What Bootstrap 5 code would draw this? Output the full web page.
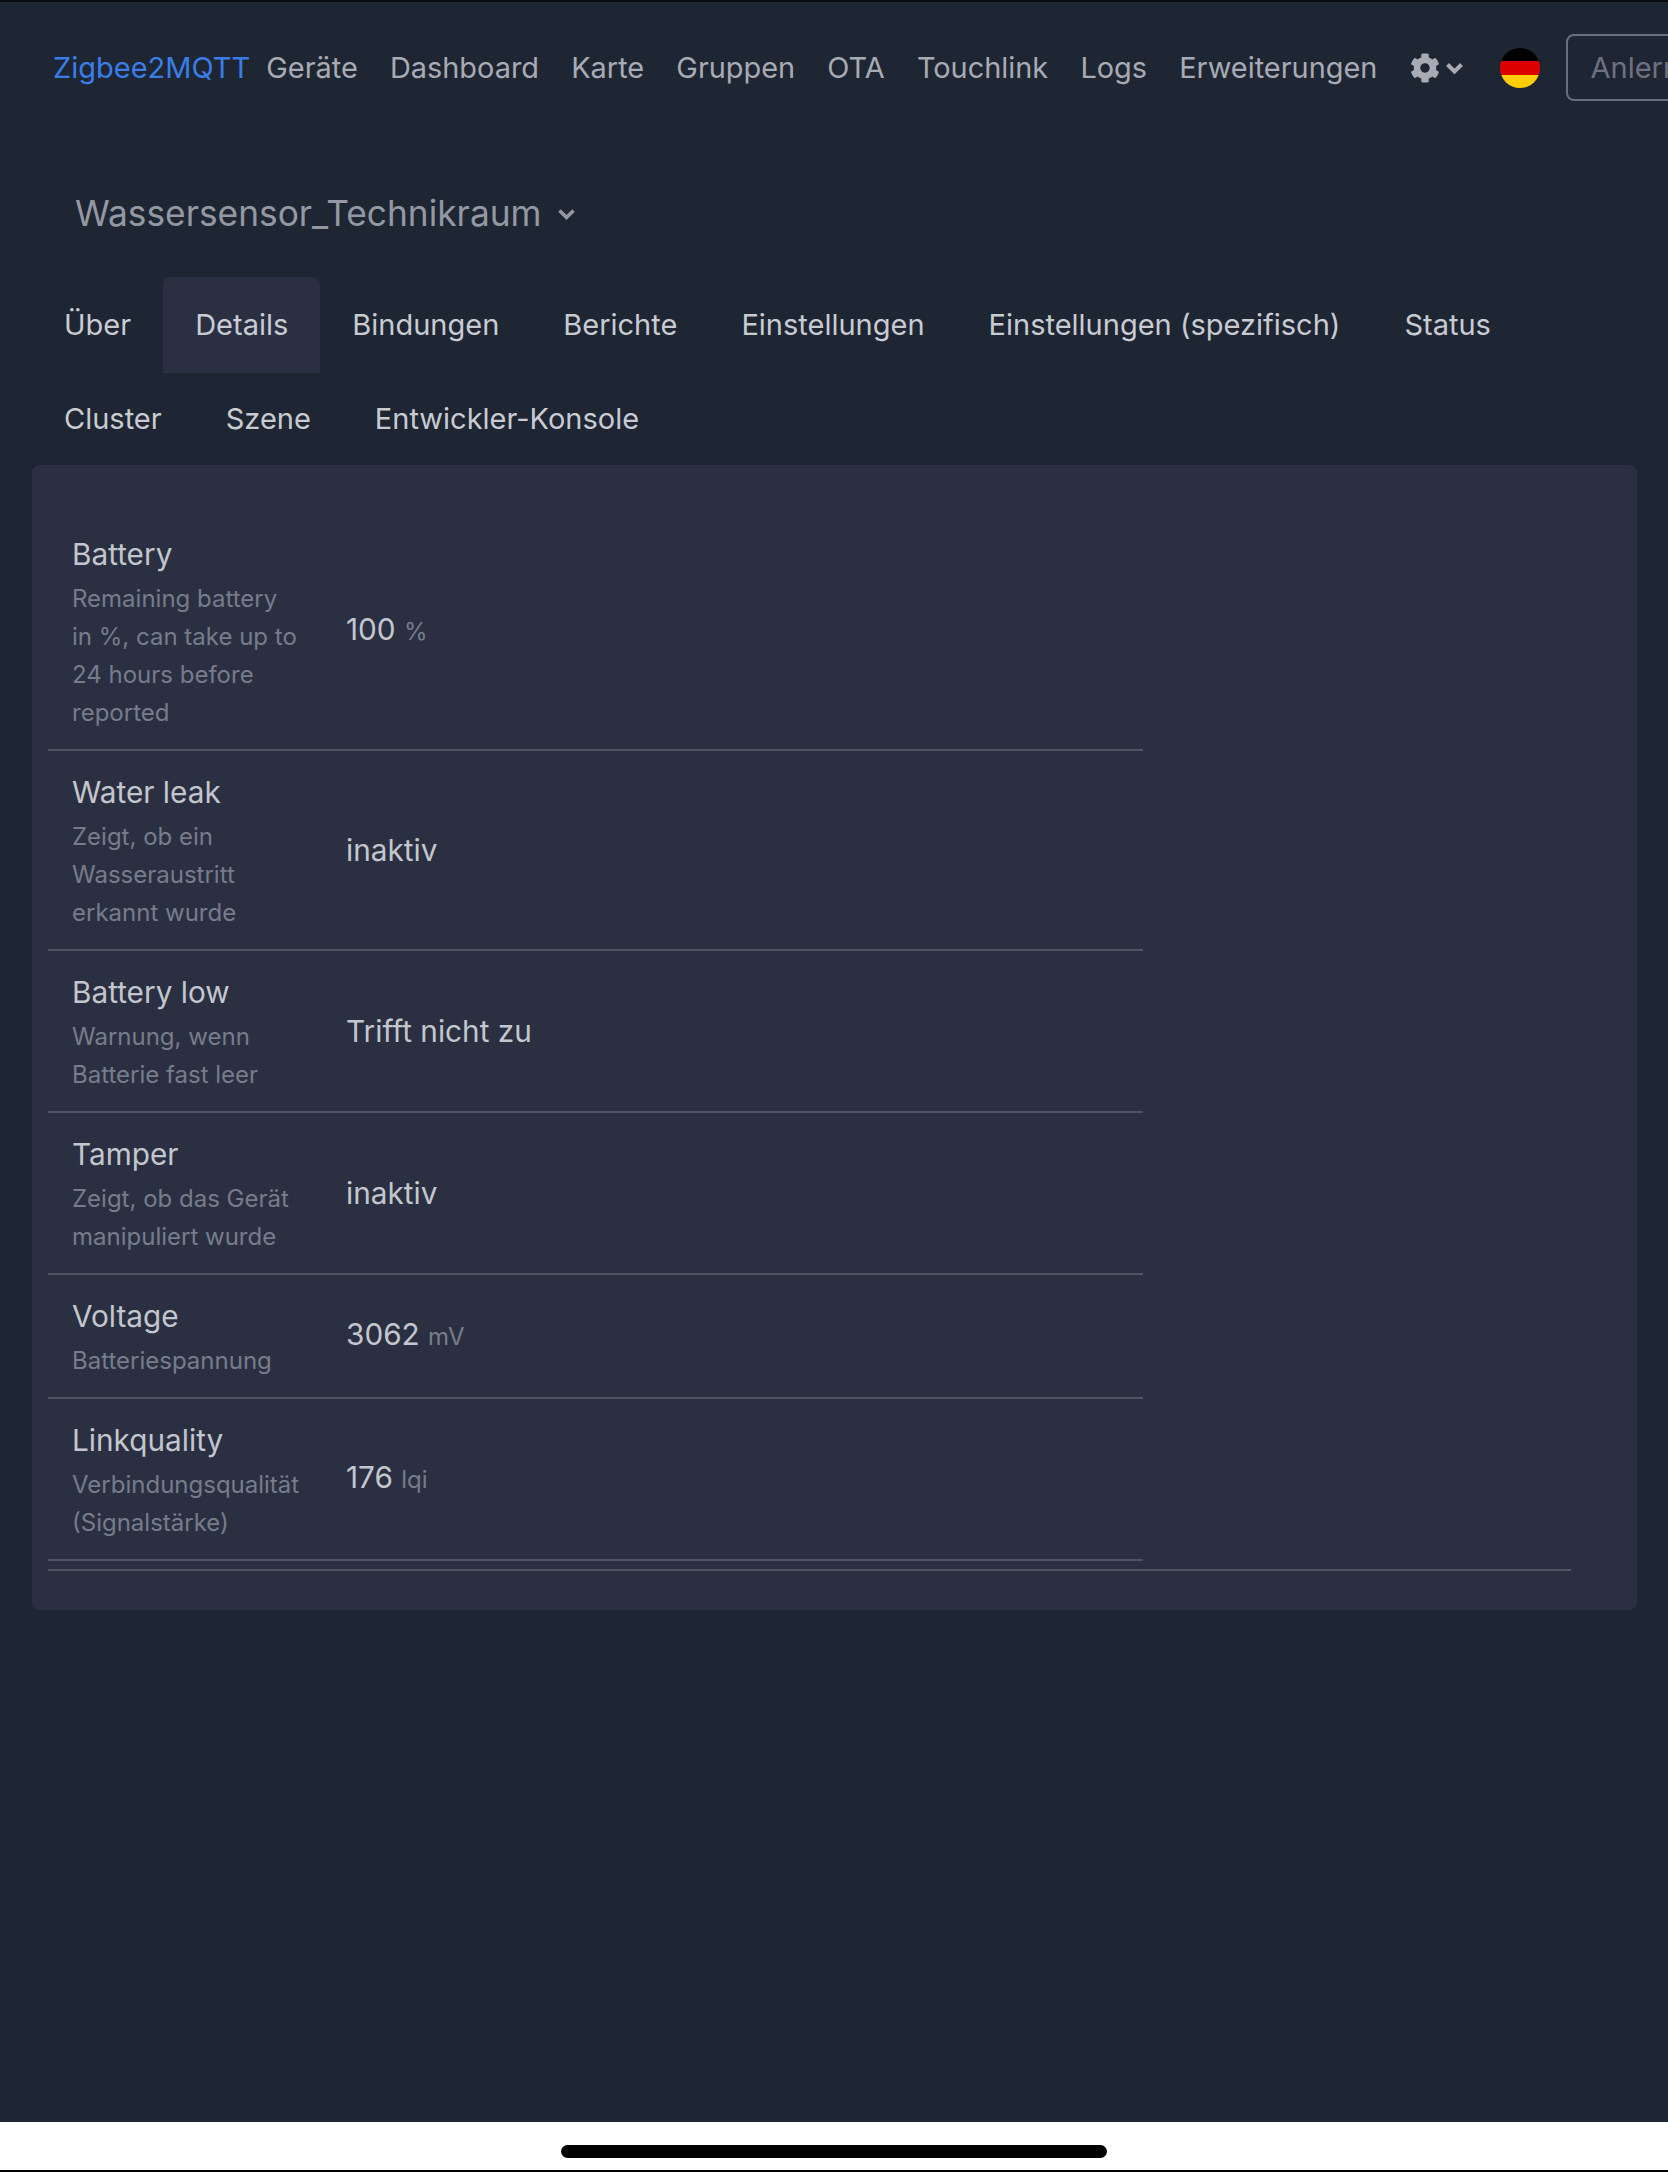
<!doctype html>
<html lang="de">
<head>
<meta charset="utf-8">
<title>Zigbee2MQTT</title>
<link href="https://cdn.jsdelivr.net/npm/bootstrap@5.3.0/dist/css/bootstrap.min.css" rel="stylesheet">
<style>
html,body{height:100%}
body{font-family:Inter,"Liberation Sans",sans-serif;background:#1f2633;color:#c9cbd2;font-size:29px;line-height:42px;overflow:hidden;width:1668px;height:2172px;border-top:2px solid #0b0e14}
.zapp{flex:1 1 auto;min-height:0;overflow:hidden}
.znav{padding:32px 0 0 53px;flex-wrap:nowrap;justify-content:flex-start;width:1900px}
.znav .navbar-brand{color:#3b7de8;font-size:29px;line-height:42px;padding:0;margin:0 16px 0 0}
.znav.navbar-expand .navbar-nav .nav-link{color:#a8abb3;font-size:28.9px;line-height:42px;padding:0;margin-right:32.2px}
.zgear{display:flex;align-items:center;gap:6px;color:#a8abb3;margin-right:37px}
.zflag{width:40px;height:40px;background:linear-gradient(#000 33.3%,#d00 33.3%,#d00 66.6%,#ffce00 66.6%);margin-right:26px;flex:none}
.zlearn.btn{font-size:29px;line-height:42px;padding:10.5px 23px;border:2px solid #6b6f7c;color:#6e7280;border-radius:8px;white-space:nowrap;background:transparent}
.ztitle{padding:0 0 0 75px;margin-top:85px;height:56px;margin-bottom:35px;line-height:52px;font-size:35.3px;color:#9498a2;gap:16px}
.ztabs{margin:0 0 0 32px;border:0;width:1560px;--bs-nav-tabs-border-width:2px;--bs-nav-tabs-border-radius:8px}
.ztabs .nav-link{font-size:29px;line-height:42px;padding:25px 30px;color:#c9cbd2;border:2px solid transparent}
.ztabs .nav-link.active{background:#2a3042;color:#c9cbd2;border-color:#2a3042}
.zpanel{margin-left:32px;width:1605px;background:#2a3042;border:0;border-radius:8px;padding:48px 66px 39px 16px;color:#c4c6cd}
.zexpo{width:1095px}
.zline{border-bottom:2px solid #4f5563;padding:20px 0 17px}
.zlabel{width:298px;padding:0 45px 0 24px;flex:none}
.zname{line-height:42px;margin-bottom:5px;font-size:29.75px}
.zdesc{font-size:24px;line-height:38px;color:#777c8b}
.zval{font-size:29.75px;margin-bottom:4px}
.zunit{font-size:24px;color:#777c8b}
.zrule{border:0;border-top:2px solid #4f5563;opacity:1;margin:8px 0 0}
.zhome{height:50px;background:#fff;flex:none;border-bottom:2px solid #000;padding-top:10px}
.zbar{width:546px;height:13px;background:#000;border-radius:7px}
</style>
</head>
<body class="d-flex flex-column">
<div class="zapp">
  <nav class="navbar navbar-expand znav">
    <a class="navbar-brand" href="#">Zigbee2MQTT</a>
    <ul class="navbar-nav flex-row">
      <li class="nav-item"><a class="nav-link" href="#">Geräte</a></li>
      <li class="nav-item"><a class="nav-link" href="#">Dashboard</a></li>
      <li class="nav-item"><a class="nav-link" href="#">Karte</a></li>
      <li class="nav-item"><a class="nav-link" href="#">Gruppen</a></li>
      <li class="nav-item"><a class="nav-link" href="#">OTA</a></li>
      <li class="nav-item"><a class="nav-link" href="#">Touchlink</a></li>
      <li class="nav-item"><a class="nav-link" href="#">Logs</a></li>
      <li class="nav-item"><a class="nav-link" href="#">Erweiterungen</a></li>
    </ul>
    <div class="zgear">
      <svg width="30" height="30" viewBox="0 0 512 512" fill="currentColor"><path d="M487.4 315.7l-42.6-24.6c4.3-23.2 4.3-47 0-70.2l42.6-24.6c4.9-2.8 7.1-8.6 5.5-14-11.1-35.6-30-67.8-54.7-94.6-3.8-4.1-10-5.1-14.8-2.3L380.8 110c-17.9-15.4-38.5-27.3-60.8-35.1V25.8c0-5.6-3.9-10.5-9.4-11.7-36.7-8.2-74.3-7.8-109.2 0-5.5 1.2-9.4 6.1-9.4 11.7V75c-22.2 7.9-42.8 19.8-60.8 35.1L88.7 85.5c-4.9-2.8-11-1.9-14.8 2.3-24.7 26.7-43.6 58.9-54.7 94.6-1.7 5.4.6 11.2 5.5 14L67.3 221c-4.3 23.2-4.3 47 0 70.2l-42.6 24.6c-4.9 2.8-7.1 8.6-5.5 14 11.1 35.6 30 67.8 54.7 94.6 3.8 4.1 10 5.1 14.8 2.3l42.6-24.6c17.9 15.4 38.5 27.3 60.8 35.1v49.2c0 5.6 3.9 10.5 9.4 11.7 36.7 8.2 74.3 7.8 109.2 0 5.5-1.2 9.4-6.1 9.4-11.7v-49.2c22.2-7.9 42.8-19.8 60.8-35.1l42.6 24.6c4.9 2.8 11 1.9 14.8-2.3 24.7-26.7 43.6-58.9 54.7-94.6 1.5-5.5-.7-11.3-5.6-14.1zM256 336c-44.1 0-80-35.9-80-80s35.9-80 80-80 80 35.9 80 80-35.9 80-80 80z"/></svg>
      <svg width="17" height="12" viewBox="0 0 17 12" fill="none" stroke="currentColor" stroke-width="4"><path d="M1.5 2.5l7 7 7-7"/></svg>
    </div>
    <span class="zflag rounded-circle"></span>
    <button class="btn zlearn" type="button">Anlernen aktivieren (Alle)</button>
  </nav>

  <div class="ztitle d-flex align-items-center">
    <span>Wassersensor_Technikraum</span>
    <svg width="17" height="12" viewBox="0 0 17 12" fill="none" stroke="#9498a2" stroke-width="3.5"><path d="M1.5 2.5l7 7 7-7"/></svg>
  </div>

  <ul class="nav nav-tabs ztabs">
    <li class="nav-item"><a class="nav-link" href="#">Über</a></li>
    <li class="nav-item"><a class="nav-link active" href="#">Details</a></li>
    <li class="nav-item"><a class="nav-link" href="#">Bindungen</a></li>
    <li class="nav-item"><a class="nav-link" href="#">Berichte</a></li>
    <li class="nav-item"><a class="nav-link" href="#">Einstellungen</a></li>
    <li class="nav-item"><a class="nav-link" href="#">Einstellungen (spezifisch)</a></li>
    <li class="nav-item"><a class="nav-link" href="#">Status</a></li>
    <li class="nav-item"><a class="nav-link" href="#">Cluster</a></li>
    <li class="nav-item"><a class="nav-link" href="#">Szene</a></li>
    <li class="nav-item"><a class="nav-link" href="#">Entwickler-Konsole</a></li>
  </ul>

  <div class="card zpanel">
    <div class="zexpo">
      <div class="zline d-flex align-items-center">
        <div class="zlabel"><div class="zname">Battery</div><div class="zdesc">Remaining battery in %, can take up to 24 hours before reported</div></div>
        <div class="zval">100 <span class="zunit">%</span></div>
      </div>
      <div class="zline d-flex align-items-center">
        <div class="zlabel"><div class="zname">Water leak</div><div class="zdesc">Zeigt, ob ein Wasseraustritt erkannt wurde</div></div>
        <div class="zval">inaktiv</div>
      </div>
      <div class="zline d-flex align-items-center">
        <div class="zlabel"><div class="zname">Battery low</div><div class="zdesc">Warnung, wenn Batterie fast leer</div></div>
        <div class="zval">Trifft nicht zu</div>
      </div>
      <div class="zline d-flex align-items-center">
        <div class="zlabel"><div class="zname">Tamper</div><div class="zdesc">Zeigt, ob das Gerät manipuliert wurde</div></div>
        <div class="zval">inaktiv</div>
      </div>
      <div class="zline d-flex align-items-center">
        <div class="zlabel"><div class="zname">Voltage</div><div class="zdesc">Batteriespannung</div></div>
        <div class="zval">3062 <span class="zunit">mV</span></div>
      </div>
      <div class="zline d-flex align-items-center">
        <div class="zlabel"><div class="zname">Linkquality</div><div class="zdesc">Verbindungsqualität (Signalstärke)</div></div>
        <div class="zval">176 <span class="zunit">lqi</span></div>
      </div>
    </div>
    <hr class="zrule">
  </div>
</div>
<div class="zhome d-flex justify-content-center align-items-center"><div class="zbar"></div></div>
</body>
</html>
